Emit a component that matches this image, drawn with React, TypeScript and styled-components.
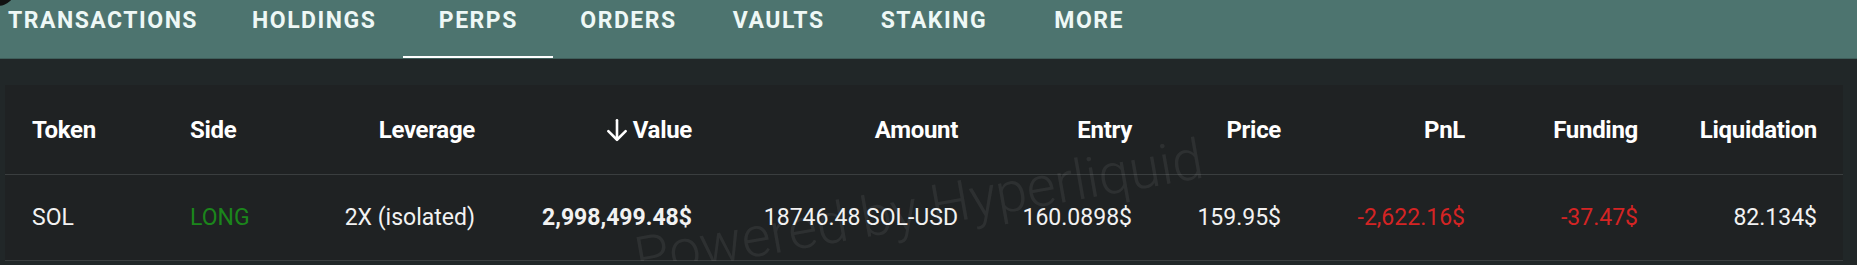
import React from "react";
import styled, { createGlobalStyle } from "styled-components";

const GlobalStyle = createGlobalStyle`
  html, body {
    margin: 0;
    padding: 0;
    background: #212728;
    overflow: hidden;
  }
  body {
    font-family: Roboto, "Noto Sans", Arial, sans-serif;
  }
`;

const Page = styled.div`
  position: relative;
  width: 1857px;
  height: 265px;
  background: #212728;
  overflow: hidden;
`;

const Blob = styled.div`
  position: absolute;
  top: -30px;
  left: -22px;
  width: 38px;
  height: 36px;
  border-radius: 50%;
  background: #111;
  z-index: 2;
`;

const TabBar = styled.nav`
  height: 59px;
  background: #4d746f;
  border-bottom: 1px solid #3f5e5a;
  box-sizing: border-box;
  overflow: hidden;
`;

const TabList = styled.div`
  display: flex;
  height: 100%;
  margin-left: -19px;
`;

const Tab = styled.div<{ $active?: boolean }>`
  position: relative;
  min-width: 150px;
  box-sizing: border-box;
  padding: 9px 27px 0;
  text-align: center;
  font-size: 23px;
  line-height: 23px;
  font-weight: 700;
  letter-spacing: 1.5px;
  text-transform: uppercase;
  color: #eef8f6;
  white-space: nowrap;

  &::after {
    content: "";
    display: ${(p) => (p.$active ? "block" : "none")};
    position: absolute;
    left: 0;
    right: 0;
    bottom: -1px;
    height: 3px;
    background: #ffffff;
  }
`;

const Panel = styled.section`
  position: relative;
  margin: 26px 14px 0 5px;
  background: #1f2223;
  overflow: hidden;
`;

const Row = styled.div<{ $head?: boolean }>`
  display: grid;
  grid-template-columns: 158px 140px 145px 217px 266px 174px 149px 184px 173px 179px;
  align-items: center;
  height: ${(p) => (p.$head ? "89px" : "85px")};
  padding: 0 26px 0 27px;
  border-bottom: 1px solid #3a3e3f;
`;

const HeadCell = styled.div<{ $right?: boolean }>`
  display: flex;
  align-items: center;
  justify-content: ${(p) => (p.$right ? "flex-end" : "flex-start")};
  gap: 3px;
  font-size: 24px;
  line-height: 24px;
  font-weight: 700;
  letter-spacing: -0.3px;
  color: #ffffff;
  white-space: nowrap;
`;

const Cell = styled.div<{ $right?: boolean; $tone?: "long" | "loss"; $bold?: boolean }>`
  text-align: ${(p) => (p.$right ? "right" : "left")};
  font-size: 23px;
  line-height: 23px;
  font-weight: ${(p) => (p.$bold ? 700 : 400)};
  color: ${(p) =>
    p.$tone === "long" ? "#1b861b" : p.$tone === "loss" ? "#d42424" : "#f2f2f2"};
  white-space: nowrap;
`;

/* faint diagonal "powered by" stamp over the table */
const Watermark = styled.div`
  position: absolute;
  left: 636px;
  top: 140px;
  font-family: Roboto, "Liberation Sans", Arial, sans-serif;
  font-size: 56px;
  font-weight: 300;
  color: rgba(255, 255, 255, 0.065);
  transform: rotate(-10deg);
  transform-origin: left bottom;
  white-space: nowrap;
  pointer-events: none;
`;

const SortArrow = () => (
  <svg width="26" height="26" viewBox="0 0 24 24" fill="none" stroke="#ffffff" strokeWidth="2.4" strokeLinecap="round" strokeLinejoin="round">
    <path d="M12 3v17.5" />
    <path d="M4 13l8 8 8-8" />
  </svg>
);

const tabs = ["Transactions", "Holdings", "Perps", "Orders", "Vaults", "Staking", "More"];

type Col = { label: string; right?: boolean; sort?: boolean };

const columns: Col[] = [
  { label: "Token" },
  { label: "Side" },
  { label: "Leverage", right: true },
  { label: "Value", right: true, sort: true },
  { label: "Amount", right: true },
  { label: "Entry", right: true },
  { label: "Price", right: true },
  { label: "PnL", right: true },
  { label: "Funding", right: true },
  { label: "Liquidation", right: true },
];

type Position = {
  token: string;
  side: string;
  leverage: string;
  value: string;
  amount: string;
  entry: string;
  price: string;
  pnl: string;
  funding: string;
  liquidation: string;
};

const positions: Position[] = [
  {
    token: "SOL",
    side: "LONG",
    leverage: "2X (isolated)",
    value: "2,998,499.48$",
    amount: "18746.48 SOL-USD",
    entry: "160.0898$",
    price: "159.95$",
    pnl: "-2,622.16$",
    funding: "-37.47$",
    liquidation: "82.134$",
  },
];

const isLoss = (v: string) => v.startsWith("-");

function PositionsTable() {
  return (
    <Panel>
      <Row $head>
        {columns.map((c) => (
          <HeadCell key={c.label} $right={c.right}>
            {c.sort && <SortArrow />}
            {c.label}
          </HeadCell>
        ))}
      </Row>
      {positions.map((p) => (
        <Row key={p.token}>
          <Cell>{p.token}</Cell>
          <Cell $tone="long">{p.side}</Cell>
          <Cell $right>{p.leverage}</Cell>
          <Cell $right $bold>
            {p.value}
          </Cell>
          <Cell $right>{p.amount}</Cell>
          <Cell $right>{p.entry}</Cell>
          <Cell $right>{p.price}</Cell>
          <Cell $right $tone={isLoss(p.pnl) ? "loss" : undefined}>
            {p.pnl}
          </Cell>
          <Cell $right $tone={isLoss(p.funding) ? "loss" : undefined}>
            {p.funding}
          </Cell>
          <Cell $right>{p.liquidation}</Cell>
        </Row>
      ))}
      <Watermark>Powered by Hyperliquid</Watermark>
    </Panel>
  );
}

export default function App() {
  return (
    <Page>
      <GlobalStyle />
      <Blob />
      <TabBar>
        <TabList>
          {tabs.map((t) => (
            <Tab key={t} $active={t === "Perps"}>
              {t}
            </Tab>
          ))}
        </TabList>
      </TabBar>
      <PositionsTable />
    </Page>
  );
}
